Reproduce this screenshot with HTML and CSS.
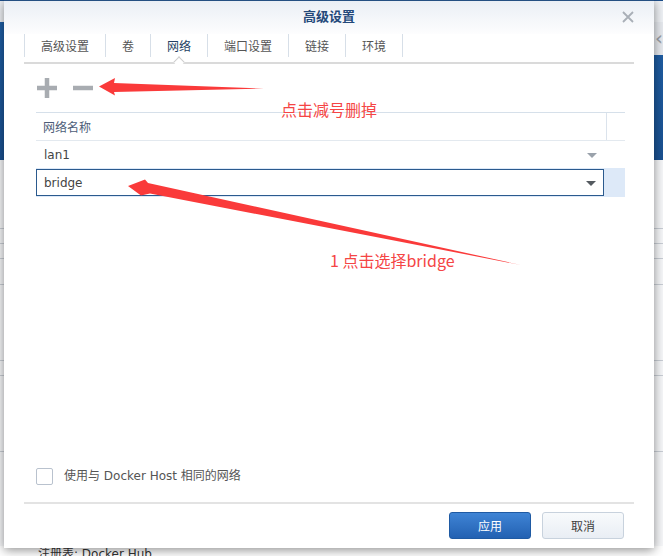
FILE: index.html
```html
<!DOCTYPE html>
<html lang="zh-CN">
<head>
    <meta charset="UTF-8">
    <meta name="viewport" content="width=device-width, initial-scale=1.0">
    <title>高级设置</title>
    <link rel="stylesheet" href="styles.css">
</head>
<body>
    <div class="app">
        <div class="app-top"></div>
        <div class="app-band">
            <div class="app-band-side">&lsaquo;</div>
        </div>
        <div class="app-list">
            <div class="app-row tall"></div>
            <div class="app-row"></div>
            <div class="app-row"></div>
            <div class="app-row mid"></div>
            <div class="app-row big"></div>
            <div class="app-row"></div>
            <div class="app-row big"></div>
        </div>
        <div class="app-foot">注册表: Docker Hub</div>
    </div>

    <div class="dialog">
        <div class="dialog-header">
            <span></span>
            <span class="dialog-title">高级设置</span>
            <span class="dialog-close">
                <svg width="12" height="12" viewBox="0 0 12 12"><path d="M1 1 L11 11 M11 1 L1 11" stroke="#a9afb7" stroke-width="1.8" fill="none"/></svg>
            </span>
        </div>

        <div class="tabs">
            <a class="tab" href="#">高级设置</a>
            <a class="tab" href="#">卷</a>
            <a class="tab active" href="#">网络</a>
            <a class="tab" href="#">端口设置</a>
            <a class="tab" href="#">链接</a>
            <a class="tab" href="#">环境</a>
        </div>

        <div class="dialog-body">
            <div class="toolbar">
                <button class="tool-btn" title="新增">
                    <svg width="20" height="20" viewBox="0 0 20 20"><path d="M0 10 H20 M10 0 V20" stroke="#a8acb1" stroke-width="4.5" fill="none"/></svg>
                </button>
                <button class="tool-btn" title="删除">
                    <svg width="20" height="20" viewBox="0 0 20 20"><path d="M0 10 H20" stroke="#a8acb1" stroke-width="4.5" fill="none"/></svg>
                </button>
            </div>

            <div class="grid">
                <div class="grid-head">
                    <div class="grid-col">网络名称</div>
                    <div class="grid-col-end"></div>
                </div>
                <div class="grid-row">
                    <span>lan1</span>
                    <span class="caret light"></span>
                </div>
                <div class="grid-row selected">
                    <div class="combo">
                        <span>bridge</span>
                        <span class="caret"></span>
                    </div>
                </div>
            </div>

            <label class="check">
                <span class="check-box"></span>
                使用与 Docker Host 相同的网络
            </label>
        </div>

        <div class="dialog-footer">
            <button class="btn primary">应用</button>
            <button class="btn">取消</button>
        </div>
    </div>

    <svg class="annot" width="663" height="556" viewBox="0 0 663 556">
        <polygon points="99,86.5 115,78 114,83 264,88.5 114,92 115,95.5" fill="#fa3a3a"/>
        <polygon points="128,186 145,179.5 148,183 521,265 150,193.5 141,195.5" fill="#fa3a3a"/>
    </svg>
    <div class="note note-del">点击减号删掉</div>
    <div class="note note-sel">1 点击选择bridge</div>
</body>
</html>
```

FILE: styles.css
```css
body {
    margin: 0;
    padding: 0;
    width: 663px;
    height: 556px;
    overflow: hidden;
    font-family: "DejaVu Sans", "Noto Sans CJK SC", sans-serif;
    font-size: 12px;
    color: #444;
    background-color: #f4f5f7;
}

/* app behind the dialog */
.app {
    display: flex;
    flex-direction: column;
    height: 556px;
}
.app-top {
    height: 22px;
    background-color: #eef1f5;
    border-top: 1px solid #1d4f8b;
    box-sizing: border-box;
}
.app-band {
    height: 138px;
    background: linear-gradient(#1f5fa6, #1a5191);
    display: flex;
    justify-content: flex-end;
}
.app-band-side {
    width: 10px;
    height: 33px;
    background-color: #e6e9ee;
    color: #9aa0a8;
    font-size: 20px;
    line-height: 33px;
    text-align: right;
}
.app-list {
    flex: 1;
    display: flex;
    flex-direction: column;
    background-color: #f6f7f9;
}
.app-row {
    height: 14px;
    border-bottom: 1px solid #c9ced5;
}
.app-row.tall {
    height: 68px;
}
.app-row.mid {
    height: 25px;
}
.app-row.big {
    height: 75px;
}
.app-foot {
    margin-top: auto;
    height: 10px;
    padding-left: 38px;
    line-height: 16px;
    color: #333;
    background-color: #fff;
    overflow: hidden;
}

/* dialog window */
.dialog {
    position: absolute;
    left: 4px;
    top: 0;
    width: 650px;
    height: 548px;
    background-color: #fff;
    border-top: 1px solid #244f82;
    box-sizing: border-box;
    box-shadow: 0 2px 10px rgba(0, 0, 0, 0.45);
    display: flex;
    flex-direction: column;
}
.dialog-header {
    height: 33px;
    display: grid;
    grid-template-columns: 1fr auto 1fr;
    align-items: center;
    background: linear-gradient(#eaeff5, #fdfdfe);
}
.dialog-title {
    font-size: 13px;
    font-weight: bold;
    color: #24497a;
    font-family: "Noto Sans CJK SC", sans-serif;
    line-height: 16px;
    margin-top: -3px;
}
.dialog-close {
    justify-self: end;
    margin-right: 20px;
    height: 12px;
    margin-top: -1px;
}
.dialog-close svg {
    display: block;
}

.tabs {
    display: flex;
    margin: 0 20px;
    padding-bottom: 5px;
    border-bottom: 2px solid #dadada;
    align-items: flex-start;
}
.tab {
    position: relative;
    height: 23px;
    line-height: 23px;
    padding: 0 16px;
    border-left: 1px solid #d7dfe8;
    color: #555;
    text-decoration: none;
    font-family: "Noto Sans CJK SC", sans-serif;
    font-size: 12px;
}
.tab:last-child {
    border-right: 1px solid #d7dfe8;
}
.tab.active {
    color: #233f63;
}
.tab.active::after {
    content: "";
    position: absolute;
    left: 50%;
    bottom: -9px;
    width: 7px;
    height: 7px;
    margin-left: -4px;
    background-color: #fff;
    border-top: 1px solid #cdcdcd;
    border-left: 1px solid #cdcdcd;
    transform: rotate(45deg);
}

.dialog-body {
    flex: 1;
    display: flex;
    flex-direction: column;
    padding: 0 29px 0 32px;
}
.toolbar {
    height: 48px;
    display: flex;
    align-items: center;
    gap: 16px;
    padding-left: 1px;
}
.tool-btn {
    border: none;
    background: none;
    padding: 0;
    width: 20px;
    height: 20px;
    cursor: pointer;
}
.tool-btn svg {
    display: block;
}

.grid {
    display: flex;
    flex-direction: column;
}
.grid-head {
    display: flex;
    height: 27px;
    border-top: 1px solid #d6e0ea;
    border-bottom: 1px solid #e3e9ef;
}
.grid-col {
    flex: 1;
    padding-left: 7px;
    line-height: 27px;
    color: #4d5d78;
    font-family: "Noto Sans CJK SC", sans-serif;
}
.grid-col-end {
    width: 18px;
    border-left: 1px solid #dbe3ec;
}
.grid-row {
    height: 27px;
    display: flex;
    align-items: center;
    justify-content: space-between;
    padding: 0 28px 0 8px;
}
.grid-row.selected {
    height: 29px;
    padding: 0 21px 0 0;
    background-color: #dde9f8;
}
.combo {
    flex: 1;
    height: 27px;
    margin-top: 1px;
    margin-bottom: 1px;
    box-sizing: border-box;
    border: 1px solid #2b5a8e;
    background-color: #fff;
    display: flex;
    align-items: center;
    justify-content: space-between;
    padding: 0 7px 0 7px;
}
.caret {
    width: 0;
    height: 0;
    border-left: 5px solid transparent;
    border-right: 5px solid transparent;
    border-top: 5px solid #555a60;
    margin-top: 1px;
}
.caret.light {
    border-top-color: #9aa2ab;
}

.check {
    margin-top: auto;
    margin-bottom: 17px;
    display: flex;
    align-items: center;
    gap: 11px;
    color: #555;
    line-height: 17px;
}
.check-box {
    width: 17px;
    height: 17px;
    box-sizing: border-box;
    border: 1px solid #b9c2ce;
    border-radius: 2px;
    background-color: #fff;
}

.dialog-footer {
    margin: 0 20px;
    padding: 8px 10px 9px 0;
    border-top: 2px solid #e3e3e3;
    display: flex;
    justify-content: flex-end;
    gap: 11px;
}
.btn {
    width: 82px;
    height: 27px;
    border: 1px solid #c8d2dd;
    border-radius: 3px;
    background: linear-gradient(#f8fafc, #e9eef4);
    color: #404040;
    font-family: "Noto Sans CJK SC", sans-serif;
    font-size: 12px;
    cursor: pointer;
}
.btn.primary {
    border-color: #1f5aa3;
    background: linear-gradient(#3f84d5, #2361b2);
    color: #fff;
}

/* annotations drawn over the screenshot */
.annot {
    position: absolute;
    left: 0;
    top: 0;
    pointer-events: none;
}
.note {
    position: absolute;
    font-family: "Noto Sans CJK SC", sans-serif;
    font-size: 16px;
    line-height: 20px;
    color: #f54545;
}
.note-del {
    left: 281px;
    top: 99px;
}
.note-sel {
    left: 330px;
    top: 250px;
}
```
